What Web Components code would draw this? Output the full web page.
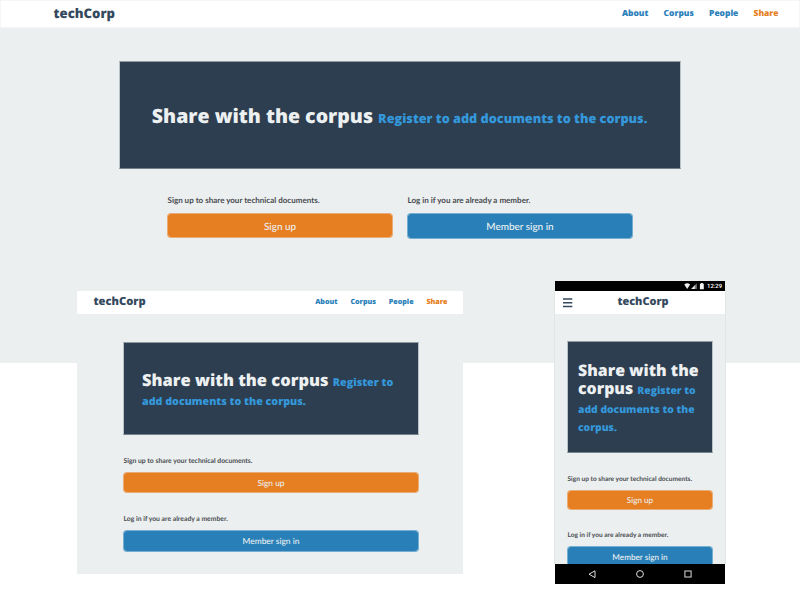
<!DOCTYPE html>
<html lang="en">
<head>
<meta charset="utf-8">
<title>techCorp</title>
<style>
  html, body { margin: 0; height: 600px; overflow: hidden; background: #fff; }
  body { position: relative; font-family: Lato, "Liberation Sans", sans-serif; text-rendering: geometricPrecision; }

  tc-screen.desktop {
    height: 363px;
    --bar-h: 26px; --bar-pad: 0 20.5px 0 52.5px; --bar-edge: 1px;
    --brand-size: 13.15px; --brand-lh: 18px; --brand-top: 3px;
    --link-size: 8.45px; --link-lh: 11px; --link-top: 7px; --link-gap: 15.2px;
    --hero-margin: 33px 119px 0; --hero-h: 108px; --hero-pad: 42px 20px 0 31.8px;
    --title-size: 19.55px; --title-lh: 24px;
    --form-dir: row; --form-gap: 14px; --form-margin: 26px 167px 0;
    --label-size: 8.1px; --label-lh: 10px; --label-gap: 8px;
    --btn-size: 9.95px; --btn-pad: 2px 0 0;
  }
  tc-screen.tablet {
    position: absolute; left: 77px; top: 291px; width: 386px; height: 283px;
    --bar-h: 23px; --bar-pad: 0 15.5px 0 16.5px;
    --brand-size: 11.15px; --brand-lh: 15px; --brand-top: 3px;
    --link-size: 7.15px; --link-lh: 10px; --link-top: 6px; --link-gap: 12.8px;
    --hero-margin: 28px 44px 0 46px; --hero-h: 93px; --hero-pad: 27px 20px 0 18px;
    --title-size: 16.48px; --title-lh: 19px;
    --form-dir: column; --form-gap: 22px; --form-margin: 22px 44px 0 46px;
    --label-size: 6.87px; --label-lh: 9px; --label-gap: 6px;
    --btn-size: 8.4px;
  }
  tc-phone { position: absolute; left: 554px; top: 281px; width: 172px; height: 303px; }
  tc-screen.phone {
    --bar-h: 23px; --bar-pad: 0 8px;
    --brand-size: 10.95px; --brand-lh: 15px; --brand-top: 3px;
    --hero-margin: 27px 12px 0; --hero-h: 112px; --hero-pad: 19px 8px 0 10px;
    --title-size: 15.9px; --title-lh: 18.4px;
    --form-dir: column; --form-gap: 21px; --form-margin: 22px 12px 0;
    --label-size: 6.63px; --label-lh: 9px; --label-gap: 6px;
    --btn-size: 8.17px;
  }
</style>
</head>
<body>

<tc-screen class="desktop">
  <tc-nav slot="nav"></tc-nav>
  <tc-prompt slot="form" tone="orange" style="--btn-h:25px" action="Sign up">Sign up to share your technical documents.</tc-prompt>
  <tc-prompt slot="form" tone="blue" style="--btn-h:26px" action="Member sign in">Log in if you are already a member.</tc-prompt>
</tc-screen>

<tc-screen class="tablet">
  <tc-nav slot="nav"></tc-nav>
  <tc-prompt slot="form" tone="orange" style="--btn-h:21px" action="Sign up">Sign up to share your technical documents.</tc-prompt>
  <tc-prompt slot="form" tone="blue" style="--btn-h:22px" action="Member sign in">Log in if you are already a member.</tc-prompt>
</tc-screen>

<tc-phone>
  <tc-screen class="phone">
    <tc-nav slot="nav" compact></tc-nav>
    <tc-prompt slot="form" tone="orange" style="--btn-h:20px" action="Sign up">Sign up to share your technical documents.</tc-prompt>
    <tc-prompt slot="form" tone="blue" style="--btn-h:22px" action="Member sign in">Log in if you are already a member.</tc-prompt>
  </tc-screen>
</tc-phone>

<template id="t-nav">
  <style>
    :host { display: flex; justify-content: space-between; align-items: flex-start; box-sizing: content-box;
      height: var(--bar-h); background: #fff; border: var(--bar-edge, 0px) solid #f5f7f7; border-radius: 1px;
      padding: var(--bar-pad); font-family: "Open Sans", sans-serif; }
    .brand { margin-top: var(--brand-top); font-weight: 800; font-size: var(--brand-size); line-height: var(--brand-lh); color: #34495e; }
    nav { display: flex; gap: var(--link-gap); margin-top: var(--link-top); }
    a { font-weight: 800; font-size: var(--link-size); line-height: var(--link-lh); color: #2980b9; white-space: nowrap; }
    a.on { color: #e67e22; }
    svg { display: none; width: 10px; height: 10px; margin-top: 7px; }
    :host([compact]) nav { display: none; }
    :host([compact]) svg { display: block; }
    :host([compact]) .brand { flex: 1; text-align: center; padding-right: 4px; }
  </style>
  <svg viewBox="0 0 10 10"><path d="M0 1h9.3M0 4.7h9.3M0 8.5h9.3" stroke="#34495e" stroke-width="1.5" fill="none"/></svg>
  <span class="brand">techCorp</span>
  <nav><a>About</a><a>Corpus</a><a>People</a><a class="on">Share</a></nav>
</template>

<template id="t-hero">
  <style>
    :host { display: block; box-sizing: border-box; margin: var(--hero-margin); height: var(--hero-h);
      padding: var(--hero-pad); background: #2d3e50; background-clip: padding-box;
      border: 1px solid; border-color: #8e9ca2 #b9c3c8 #75838e #b9c3c8; }
    h1 { margin: 0; font: 800 var(--title-size)/var(--title-lh) "Open Sans", sans-serif; color: #ecf0f1; }
    small { font-size: 65%; line-height: 0; color: #3498db; }
  </style>
  <h1>Share with the corpus <small>Register to add documents to the corpus.</small></h1>
</template>

<template id="t-prompt">
  <style>
    :host { display: flex; flex-direction: column; gap: var(--label-gap); flex: 1 1 0; --tone: 230, 126, 34; }
    :host([tone="blue"]) { --tone: 41, 128, 185; }
    .label { font-weight: 700; font-size: calc(var(--label-size) * .992); line-height: var(--label-lh); color: #4a4d50; white-space: nowrap; padding-left: .5px; }
    button { display: flex; align-items: center; justify-content: center; box-sizing: border-box; width: 100%;
      height: var(--btn-h); margin: 0; padding: var(--btn-pad, 0); border: 1px solid rgba(var(--tone), .6); border-radius: 4px;
      background: rgb(var(--tone)); background-clip: padding-box; color: #ecf0f1;
      font: 500 var(--btn-size)/12px Lato, sans-serif; text-rendering: inherit; }
  </style>
  <span class="label"><slot></slot></span>
  <button></button>
</template>

<template id="t-screen">
  <style>
    :host { display: block; background: #ebeff0; overflow: hidden; }
    .form { display: flex; flex-direction: var(--form-dir); gap: var(--form-gap); margin: var(--form-margin); }
    ::slotted(tc-prompt) { flex: 1 1 auto; min-width: 0; }
    :host(.desktop) ::slotted(tc-prompt) { flex: 1 1 0; }
  </style>
  <slot name="nav"></slot>
  <tc-hero></tc-hero>
  <div class="form"><slot name="form"></slot></div>
</template>

<template id="t-phone">
  <style>
    :host { display: flex; flex-direction: column; overflow: hidden; box-sizing: border-box; }
    .status { display: flex; align-items: center; justify-content: flex-end; height: 10px; flex: none; margin: 0 1px;
      background: #000; padding-right: 3px; color: #fff; font: 500 5.9px/10px Roboto, sans-serif; }
    .status span { padding-top: 1px; }
    .status svg { width: 21px; height: 8px; margin-right: 2px; }
    .view { flex: 1; min-height: 0; overflow: hidden; border: solid #e2e6e7; border-width: 0 1px; }
    .keys { display: flex; align-items: center; justify-content: center; gap: 38px; height: 20px; flex: none; margin: 0 1px; background: #000; }
    .keys svg { width: 10px; height: 10px; fill: none; stroke: #ddd; stroke-width: 1; }
  </style>
  <div class="status">
    <svg viewBox="0 0 21 8">
      <path d="M.3 2.4Q3.2 .2 6.1 2.4L3.2 7z" fill="#eee"/>
      <path d="M12.8 1.2V7H7.2z" fill="#777"/><path d="M10.2 3.9V7H7.2z" fill="#eee"/><path d="M10.2 3.9V7H11V3z" fill="#ddd"/>
      <path d="M15.9 1.7h1v-.8h1.9v.8h1V7.2h-3.9z" fill="#f4f4f4"/>
    </svg>
    <span>12:29</span>
  </div>
  <div class="view"><slot></slot></div>
  <div class="keys">
    <svg viewBox="0 0 10 10"><path d="M8 1.8v6.8L2 5.2z"/></svg>
    <svg viewBox="0 0 10 10"><circle cx="5" cy="5" r="3.4"/></svg>
    <svg viewBox="0 0 10 10"><rect x="1.9" y="2" width="6.2" height="6"/></svg>
  </div>
</template>

<script>
  class TemplateElement extends HTMLElement {
    constructor() {
      super();
      const id = 't-' + this.constructor.part;
      this.attachShadow({ mode: 'open' }).append(document.getElementById(id).content.cloneNode(true));
    }
  }
  customElements.define('tc-nav', class extends TemplateElement { static part = 'nav'; });
  customElements.define('tc-hero', class extends TemplateElement { static part = 'hero'; });
  customElements.define('tc-prompt', class extends TemplateElement {
    static part = 'prompt';
    connectedCallback() { this.shadowRoot.querySelector('button').textContent = this.getAttribute('action'); }
  });
  customElements.define('tc-screen', class extends TemplateElement { static part = 'screen'; });
  customElements.define('tc-phone', class extends TemplateElement { static part = 'phone'; });
</script>
</body>
</html>
